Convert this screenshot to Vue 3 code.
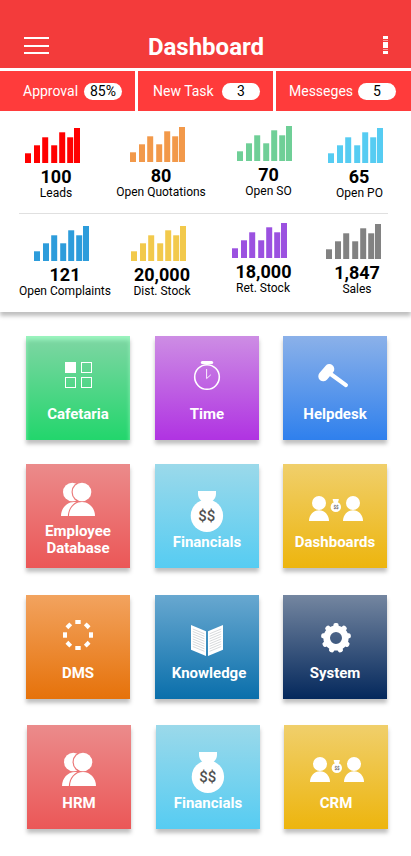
<script setup>
const tabs = [
  { label: 'Approval', count: '85%', key: 'approval' },
  { label: 'New Task', count: '3', key: 'task' },
  { label: 'Messeges', count: '5', key: 'messages' }
]

const bars = [
  [0, 25.3], [9, 17.3], [17.2, 9.3], [26.2, 17.3], [34.2, 4.3], [42.2, 9.3], [49, 0]
]

const statRows = [
  [
    { value: '100', label: 'Leads', key: 'leads', color: '#ff0000' },
    { value: '80', label: 'Open Quotations', key: 'quotations', color: '#f2994a' },
    { value: '70', label: 'Open SO', key: 'so', color: '#6fcf97' },
    { value: '65', label: 'Open PO', key: 'po', color: '#56ccf2' }
  ],
  [
    { value: '121', label: 'Open Complaints', key: 'complaints', color: '#2d9cdb' },
    { value: '20,000', label: 'Dist. Stock', key: 'dist', color: '#f2c94c' },
    { value: '18,000', label: 'Ret. Stock', key: 'ret', color: '#9b51e0' },
    { value: '1,847', label: 'Sales', key: 'sales', color: '#828282' }
  ]
]

const tileRows = [
  [
    { label: 'Cafetaria', icon: 'grid', tone: 'green' },
    { label: 'Time', icon: 'clock', tone: 'purple' },
    { label: 'Helpdesk', icon: 'gavel', tone: 'blue' }
  ],
  [
    { label: 'Employee Database', icon: 'people', tone: 'rose', tall: true },
    { label: 'Financials', icon: 'bag', tone: 'sky' },
    { label: 'Dashboards', icon: 'deal', tone: 'gold' }
  ],
  [
    { label: 'DMS', icon: 'ring', tone: 'orange' },
    { label: 'Knowledge', icon: 'book', tone: 'ocean' },
    { label: 'System', icon: 'gear', tone: 'navy' }
  ],
  [
    { label: 'HRM', icon: 'people', tone: 'rose' },
    { label: 'Financials', icon: 'bag', tone: 'sky' },
    { label: 'CRM', icon: 'deal', tone: 'gold' }
  ]
]

const pageLines = [0, 1, 2, 3, 4, 5, 6, 7]
</script>

<template>
  <div class="screen">
    <header class="bar">
      <svg class="burger" width="25" height="17" viewBox="0 0 25 17">
        <path d="M0 1H25M0 9H25M0 16H25" stroke="#fff" stroke-width="2" />
      </svg>
      <h1>Dashboard</h1>
      <svg class="more" width="5" height="18" viewBox="0 0 5 18">
        <path d="M0 0H5V3H0zM0 6H5V12H0zM0 15H5V18H0z" fill="#fff" />
        <path d="M0 4H5V5H0zM0 13H5V14H0z" fill="#fff" opacity=".5" />
      </svg>
    </header>

    <nav class="tabs">
      <div v-for="t in tabs" :key="t.key" class="tab" :class="t.key">
        <span>{{ t.label }}</span>
        <span class="pill">{{ t.count }}</span>
      </div>
    </nav>

    <section class="stats">
      <div v-for="(row, r) in statRows" :key="r" class="stat-row" :class="'row-' + r">
        <div v-for="s in row" :key="s.key" class="stat" :class="s.key">
          <svg class="chart" width="55" height="35" viewBox="0 0 55 35">
            <rect v-for="(b, i) in bars" :key="i" :x="b[0]" :y="b[1]" width="6" :height="35 - b[1]" :fill="s.color" />
          </svg>
          <strong>{{ s.value }}</strong>
          <span>{{ s.label }}</span>
        </div>
      </div>
    </section>

    <main class="tiles">
      <div v-for="(row, r) in tileRows" :key="r" class="tile-row" :class="'tiles-' + r">
        <div v-for="t in row" :key="t.label" class="tile" :class="[t.tone, { tall: t.tall }]">
          <svg class="icon" width="104" height="70" viewBox="0 0 104 70" fill="#fff">
            <g v-if="t.icon === 'grid'">
              <rect x="39" y="26" width="11" height="11" />
              <g fill="none" stroke="#fff">
                <rect x="55.5" y="26.5" width="10" height="10" />
                <rect x="39.5" y="41.5" width="10" height="10" />
                <rect x="55.5" y="41.5" width="10" height="10" />
              </g>
            </g>
            <g v-else-if="t.icon === 'clock'">
              <rect x="45.8" y="25" width="12.4" height="3" rx="1.5" />
              <circle cx="52" cy="41" r="12.3" fill="none" stroke="#fff" stroke-width="1.6" />
              <path d="M51.6 33V42.6L55.8 38.8" fill="none" stroke="#fff" stroke-width=".9" />
            </g>
            <g v-else-if="t.icon === 'gavel'" fill="none" stroke="#fff" stroke-linecap="round">
              <path d="M40.3 40.3L46.3 33.1" stroke-width="10" />
              <path d="M48 38.2L62.9 49.1" stroke-width="4.2" />
            </g>
            <g v-else-if="t.icon === 'people'" :transform="t.tall ? 'translate(0 0)' : 'translate(0 9)'">
              <mask :id="'behind-' + r">
                <rect width="104" height="70" fill="#fff" />
                <circle cx="56" cy="28" r="10.5" fill="#000" />
                <path d="M41.8 53C41.8 44 48 36.8 56 36.8H70V53z" fill="#000" />
              </mask>
              <g :mask="'url(#behind-' + r + ')'">
                <circle cx="46.3" cy="28" r="9.3" />
                <path d="M35 52C35 44.3 40.8 38 48 38S61 44.3 61 52z" />
              </g>
              <circle cx="56" cy="28" r="9.3" />
              <path d="M43 52C43 44.3 48.8 38 56 38S69 44.3 69 52z" />
            </g>
            <g v-else-if="t.icon === 'bag'">
              <path d="M43 27H61V30C61 33 59.5 35 57.5 37V42H46.5V37C44.5 35 43 33 43 30z" />
              <circle cx="51.9" cy="51.8" r="16.2" />
              <text class="money" x="51.7" y="57" text-anchor="middle">$$</text>
            </g>
            <g v-else-if="t.icon === 'deal'">
              <circle cx="36" cy="39" r="7" />
              <path d="M26 57C26 51 30.5 46.3 36 46.3S46 51 46 57z" />
              <circle cx="70" cy="39" r="7" />
              <path d="M60 57C60 51 64.5 46.3 70 46.3S80 51 80 57z" />
              <path d="M49.7 35H55.8C55.8 36.5 55.3 37.5 54.6 38.5V40H51V38.5C50.2 37.5 49.7 36.5 49.7 35z" />
              <circle cx="52.8" cy="42.9" r="5.2" />
              <text class="coins" x="53" y="44.6" text-anchor="middle">$$</text>
            </g>
            <g v-else-if="t.icon === 'ring'">
              <rect v-for="n in 8" :key="n" x="49.3" y="25" width="5.4" height="4" :transform="'rotate(' + n * 45 + ' 52 40)'" />
            </g>
            <g v-else-if="t.icon === 'book'">
              <path d="M36 30L51 36.2V61L36 54.7z" />
              <path d="M68 30L53 36.2V61L68 54.7z" />
              <g stroke="#c4c8cc" stroke-width=".7">
                <path v-for="n in pageLines" :key="n" d="M37.8 34L49.4 38.8M66.2 34L54.6 38.8" :transform="'translate(0 ' + n * 2.5 + ')'" />
              </g>
            </g>
            <g v-else>
              <circle cx="53" cy="43" r="9.3" fill="none" stroke="#fff" stroke-width="6.6" />
              <rect v-for="n in 9" :key="n" x="50.4" y="28" width="5.2" height="6" rx="2" :transform="'rotate(' + n * 40 + ' 53 43)'" />
            </g>
          </svg>
          <span class="name">{{ t.label }}</span>
        </div>
      </div>
    </main>
  </div>
</template>

<style>
body {
  background: #fff;
}
</style>

<style scoped>
.screen {
  width: 411px;
  height: 856px;
  overflow: hidden;
  background: #fff;
  font-family: Roboto, sans-serif;
  color: #000;
}

.bar {
  display: flex;
  align-items: flex-start;
  justify-content: space-between;
  box-sizing: border-box;
  height: 68px;
  padding: 32px 23px 0 24px;
  background: #f33b3b;
}

.burger {
  margin-top: 5px;
}

.more {
  margin-top: 4px;
}

h1 {
  margin: 0;
  padding-right: 1px;
  font-size: 24px;
  line-height: 30px;
  font-weight: 700;
  color: #fff;
}

.bar h1 {
  margin-right: 19px;
}

.tabs {
  display: grid;
  grid-template-columns: 135px 135px 135px;
  gap: 3px;
  padding-top: 3px;
}

.tab {
  display: flex;
  align-items: center;
  justify-content: space-between;
  box-sizing: border-box;
  height: 40px;
  padding: 0 13px 0 23px;
  background: #ff3b3b;
  color: #fff;
  font-size: 14px;
  line-height: 17px;
  white-space: nowrap;
}

.task {
  padding-left: 15px;
}

.messages {
  width: 135px;
  padding: 0 15px 0 13px;
}

.pill {
  width: 38px;
  height: 17px;
  border-radius: 9px;
  background: #fff;
  color: #000;
  text-align: center;
}

.stats {
  box-sizing: border-box;
  height: 201px;
  padding-top: 15px;
  background: #fff;
  box-shadow: 0 4px 4px rgba(0, 0, 0, 0.25);
}

.stat-row {
  display: grid;
  align-items: start;
}

.row-0 {
  height: 87px;
  grid-template-columns: 112px 98px 116px 66px;
}

.row-1 {
  padding-top: 10px;
  grid-template-columns: 130px 64px 138px 50px;
  background: linear-gradient(#e0e0e0, #e0e0e0) 19px 0 / 369px 1px no-repeat;
}

.stat {
  display: flex;
  flex-direction: column;
  align-items: center;
  white-space: nowrap;
}

.chart {
  flex: none;
  margin-right: 7px;
}

.stat strong {
  margin-top: 3px;
  font-size: 18px;
  line-height: 21px;
  font-weight: 700;
}

.stat span {
  margin-top: -1px;
  font-size: 12px;
  line-height: 14px;
}

.so strong,
.so span,
.po span,
.ret strong {
  padding-left: 1px;
}

.leads,
.po {
  padding-top: 2px;
}

.quotations,
.sales {
  padding-top: 1px;
}

.complaints,
.dist {
  padding-top: 3px;
}

.tiles {
  padding: 24px 0 0 26px;
}

.tile-row {
  display: grid;
  grid-template-columns: 129px 128px 104px;
  height: 128px;
}

.tiles-1 {
  height: 131px;
}

.tiles-2 {
  height: 130px;
}

.tiles-3 {
  padding-left: 1px;
}

.tile {
  display: flex;
  flex-direction: column;
  align-items: center;
  width: 104px;
  height: 104px;
  color: #fff;
  box-shadow: 0 4px 4px rgba(0, 0, 0, 0.25);
}

.icon {
  flex: none;
  display: block;
}

.name {
  font-size: 15px;
  line-height: 17px;
  font-weight: 700;
  text-align: center;
}

.tall .name {
  width: 80px;
  margin-top: -11px;
}

.ocean .name {
  padding-left: 4px;
}

.money {
  font-size: 15px;
  font-weight: 500;
  fill: #4f4f4f;
}

.coins {
  font-size: 4.5px;
  font-weight: 500;
  fill: #4f4f4f;
}

.green {
  background: linear-gradient(#80d6a4, #22d66c);
  box-shadow: 0 4px 4px rgba(0, 0, 0, 0.25), inset 0 4px 4px rgba(164, 255, 200, 0.75);
}

.purple {
  background: linear-gradient(#cd8de4, #b033e2);
}

.blue {
  background: linear-gradient(#8bb1e9, #2f80ed);
}

.rose {
  background: linear-gradient(#eb8b8b, #eb5757);
}

.sky {
  background: linear-gradient(#9bd9ea, #56ccf2);
}

.gold {
  background: linear-gradient(#f0cf6b, #edb50e);
}

.orange {
  background: linear-gradient(#f2a35f, #e6720a);
}

.ocean {
  background: linear-gradient(#68a8d0, #0a6fab);
}

.navy {
  background: linear-gradient(#7486a0, #04285c);
}
</style>
